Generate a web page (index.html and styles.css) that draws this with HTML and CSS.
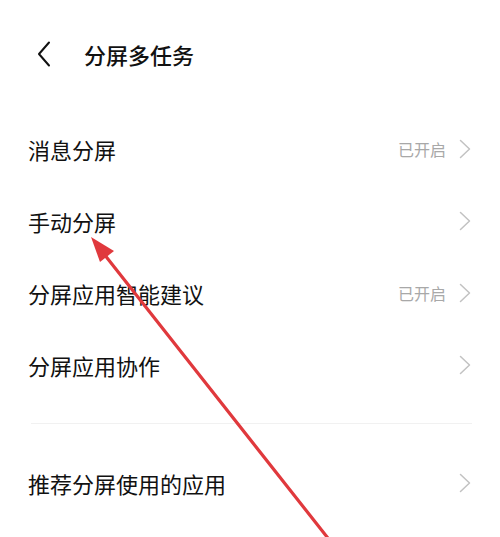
FILE: index.html
```html
<!DOCTYPE html>
<html lang="zh-CN">
<head>
<meta charset="utf-8">
<link rel="stylesheet" href="styles.css">
</head>
<body>
<div class="page">
  <header class="header">
    <svg class="back" width="14" height="26" viewBox="0 0 14 26"><path d="M12 1.5 L2 13 L12 24.5" fill="none" stroke="#111" stroke-width="2" stroke-linecap="round" stroke-linejoin="round"/></svg>
    <h1 class="title">分屏多任务</h1>
  </header>
  <ul class="list">
    <li class="row"><span class="label">消息分屏</span><span class="right"><span class="status">已开启</span><svg class="chev" width="12" height="20" viewBox="0 0 12 20"><path d="M1.5 1.5 L10.5 10 L1.5 18.5" fill="none" stroke="#c2c2c2" stroke-width="1.5" stroke-linecap="round" stroke-linejoin="round"/></svg></span></li>
    <li class="row"><span class="label">手动分屏</span><span class="right"><svg class="chev" width="12" height="20" viewBox="0 0 12 20"><path d="M1.5 1.5 L10.5 10 L1.5 18.5" fill="none" stroke="#c2c2c2" stroke-width="1.5" stroke-linecap="round" stroke-linejoin="round"/></svg></span></li>
    <li class="row"><span class="label">分屏应用智能建议</span><span class="right"><span class="status">已开启</span><svg class="chev" width="12" height="20" viewBox="0 0 12 20"><path d="M1.5 1.5 L10.5 10 L1.5 18.5" fill="none" stroke="#c2c2c2" stroke-width="1.5" stroke-linecap="round" stroke-linejoin="round"/></svg></span></li>
    <li class="row"><span class="label">分屏应用协作</span><span class="right"><svg class="chev" width="12" height="20" viewBox="0 0 12 20"><path d="M1.5 1.5 L10.5 10 L1.5 18.5" fill="none" stroke="#c2c2c2" stroke-width="1.5" stroke-linecap="round" stroke-linejoin="round"/></svg></span></li>
  </ul>
  <div class="divider"></div>
  <ul class="list">
    <li class="row"><span class="label">推荐分屏使用的应用</span><span class="right"><svg class="chev" width="12" height="20" viewBox="0 0 12 20"><path d="M1.5 1.5 L10.5 10 L1.5 18.5" fill="none" stroke="#c2c2c2" stroke-width="1.5" stroke-linecap="round" stroke-linejoin="round"/></svg></span></li>
  </ul>
  <svg class="arrow" width="500" height="537" viewBox="0 0 500 537">
    <line x1="331" y1="542" x2="104" y2="254" stroke="#e0393d" stroke-width="3.2" stroke-linecap="round"/>
    <polygon points="91,237 114,251 100,262" fill="#e0393d"/>
  </svg>
</div>
</body>
</html>
```

FILE: styles.css
```css
* { box-sizing: border-box; }
html, body {
  margin: 0;
  padding: 0;
  background: #fff;
}
body {
  font-family: "Noto Sans CJK SC", "Noto Sans", sans-serif;
  color: #111;
}
.page {
  position: relative;
  width: 500px;
  height: 537px;
  overflow: hidden;
}
.header {
  height: 108px;
  display: flex;
  align-items: center;
  padding-left: 37px;
}
.back {
  display: block;
  margin-right: 33px;
}
.title {
  margin: 0;
  font-size: 22px;
  font-weight: 500;
  line-height: 1;
  letter-spacing: 0;
}
.list {
  list-style: none;
  margin: 0;
  padding: 0;
}
.list:first-of-type { margin-top: 5px; }
.row {
  height: 72px;
  display: flex;
  align-items: center;
  justify-content: space-between;
  padding: 0 29px 0 28px;
}
.label {
  font-size: 22px;
  line-height: 1;
  color: #111;
}
.right {
  display: flex;
  align-items: center;
}
.status {
  font-size: 16px;
  color: #a8a8a8;
  margin-right: 13px;
  line-height: 1;
}
.chev { display: block; }
.divider {
  height: 1px;
  background: #f1f1f1;
  margin: 22px 28px 23px 31px;
}
.arrow {
  position: absolute;
  left: 0;
  top: 0;
  pointer-events: none;
}
```
